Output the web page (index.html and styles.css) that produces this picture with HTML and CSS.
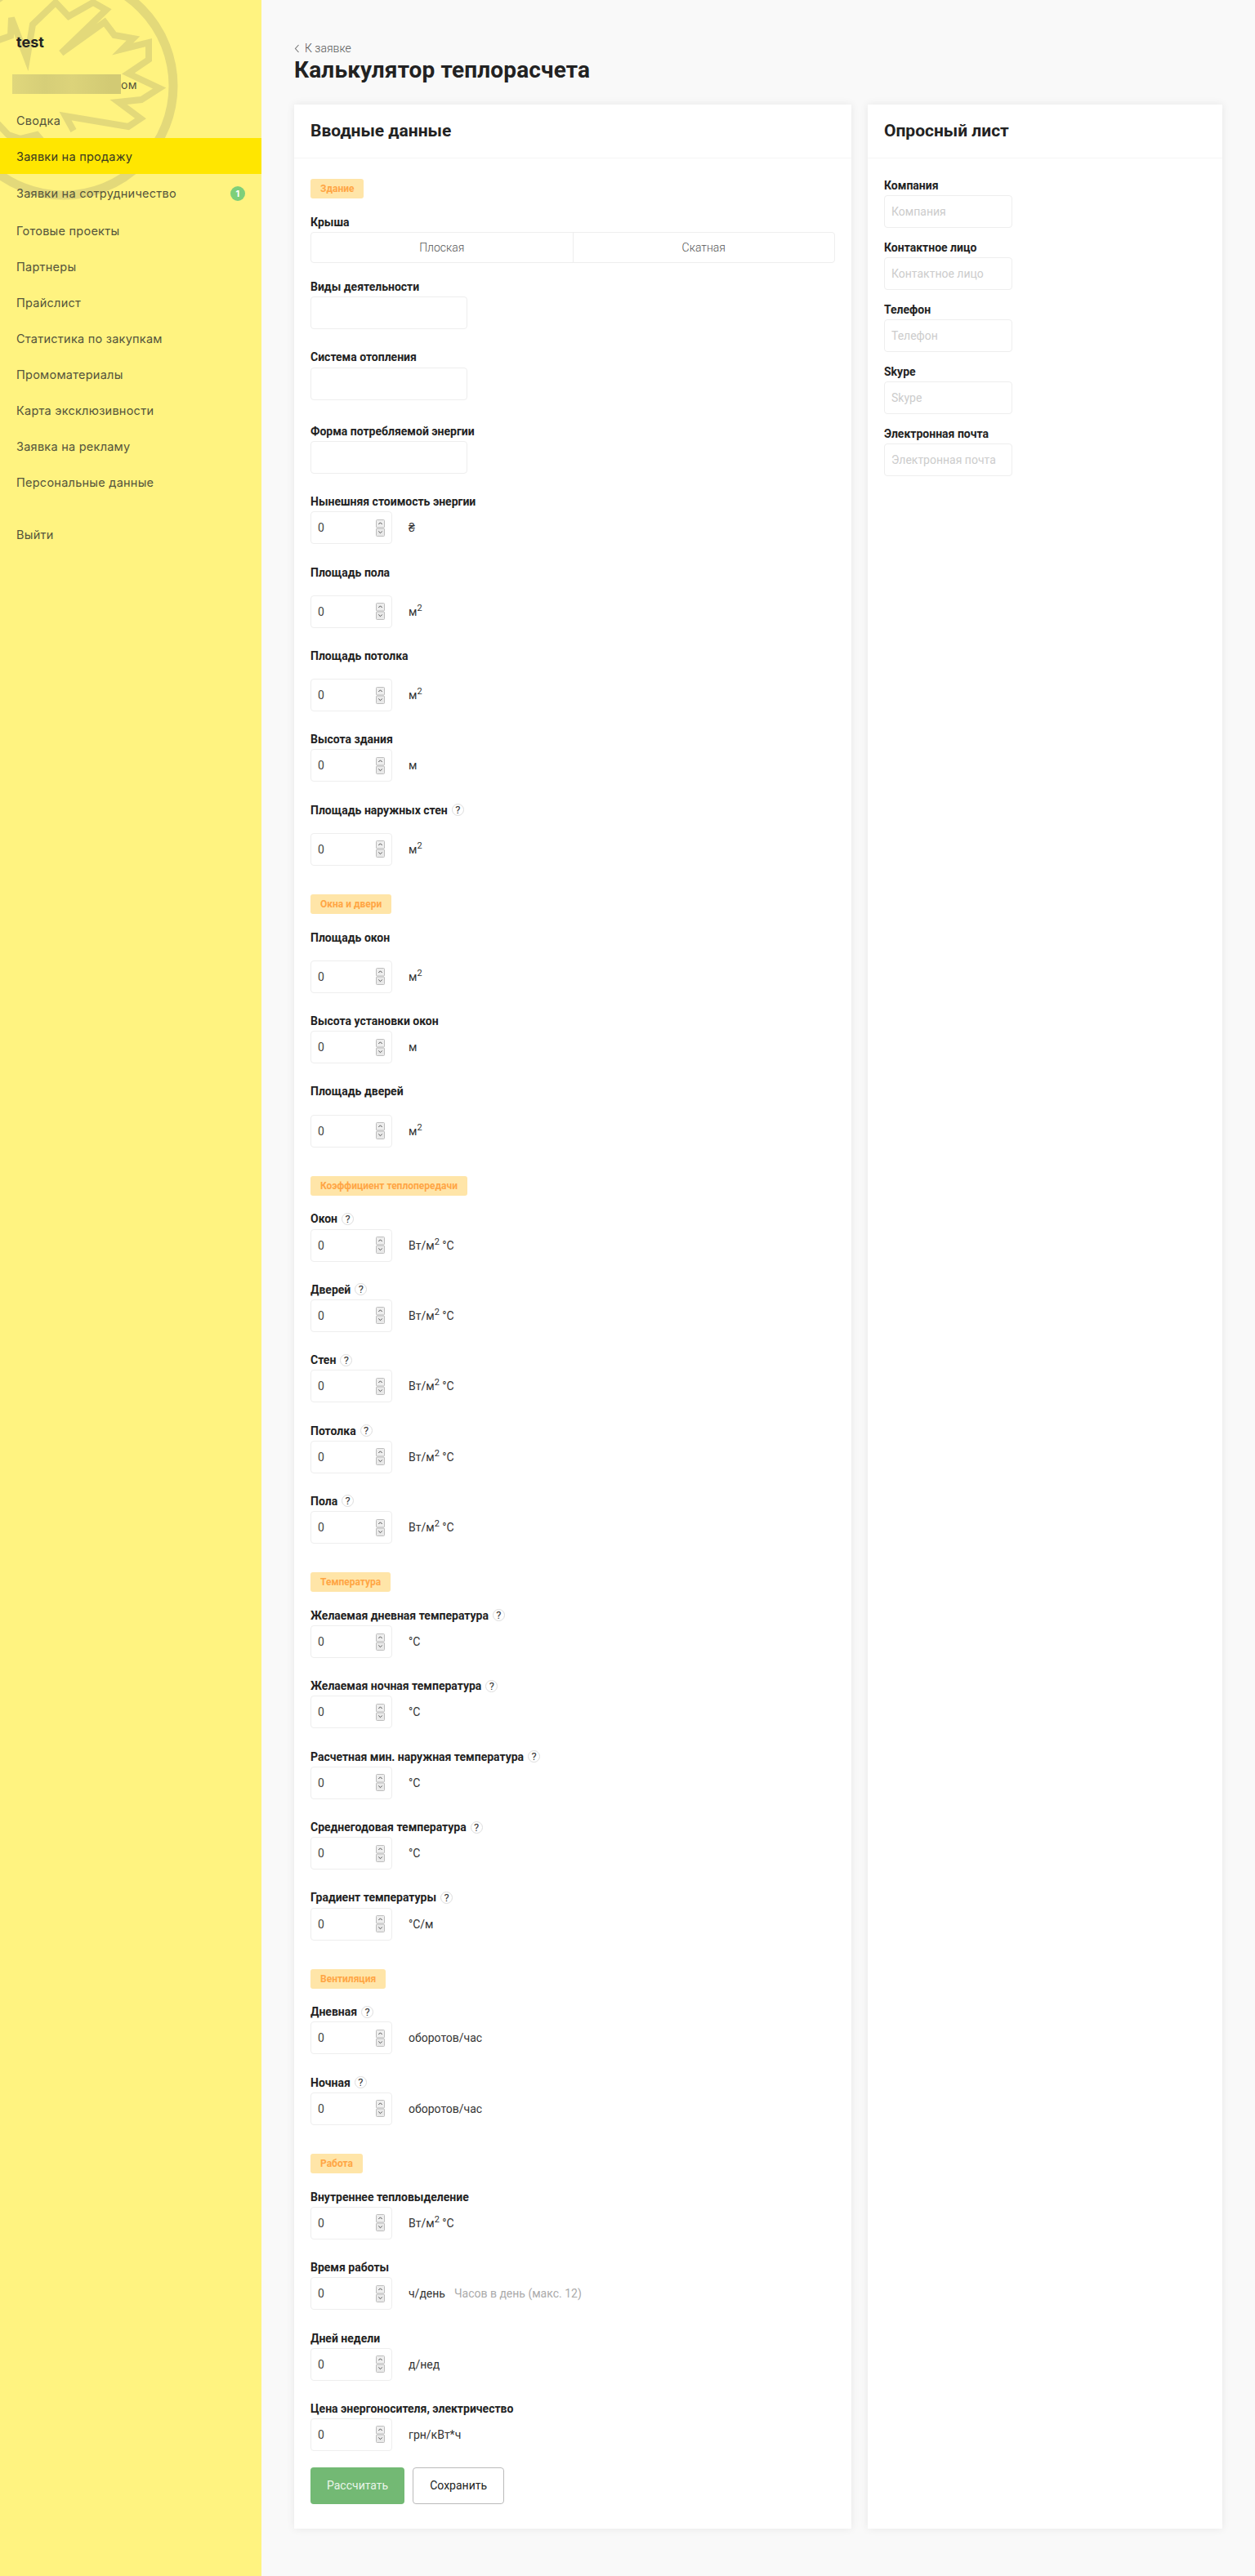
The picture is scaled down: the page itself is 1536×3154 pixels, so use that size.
FILE: index.html
```html
<!DOCTYPE html>
<html lang="ru">

<head>
    <meta charset="UTF-8">
    <meta name="viewport" content="width=device-width, initial-scale=1.0">
    <title>Калькулятор теплорасчета</title>
    <link rel="stylesheet" href="styles.css">
</head>

<body>

    <aside class="sidebar">
        <svg class="watermark" width="230" height="260" viewBox="0 0 230 260" fill="none">
            <circle cx="78" cy="105" r="134" stroke-width="11" />
            <path stroke-width="8" stroke-linejoin="miter"
                d="M-4 50 L13 44 L14 22 L33 72 L40 30 L68 3 L84 20 L114 3 L130 12 L75 65 L128 27 L140 43 L163 47 L150 60 L182 52 L182 73 L157 90 L195 108 L173 122 L145 125 L172 145 L157 155 L80 142 L90 160" />
            <path stroke-width="8" d="M-4 150 L10 165 L25 170 L45 165 L62 185" />
        </svg>
        <div class="user-name">test</div>
        <div class="user-mail"><span class="blurred"></span><span>ом</span></div>
        <nav class="menu">
            <a class="menu-item">Сводка</a>
            <a class="menu-item active">Заявки на продажу</a>
            <a class="menu-item tall">Заявки на сотрудничество <span class="count">1</span></a>
            <a class="menu-item">Готовые проекты</a>
            <a class="menu-item">Партнеры</a>
            <a class="menu-item">Прайслист</a>
            <a class="menu-item">Статистика по закупкам</a>
            <a class="menu-item">Промоматериалы</a>
            <a class="menu-item">Карта эксклюзивности</a>
            <a class="menu-item">Заявка на рекламу</a>
            <a class="menu-item">Персональные данные</a>
            <a class="menu-item logout">Выйти</a>
        </nav>
    </aside>

    <main class="content">
        <a class="back">
            <svg width="7" height="11" viewBox="0 0 7 11" fill="none">
                <path d="M5.5 1 L1.5 5.5 L5.5 10" stroke="#777" stroke-width="1.1" />
            </svg>
            К заявке
        </a>
        <h1 class="page-title">Калькулятор теплорасчета</h1>

        <div class="columns">
            <section class="card">
                <h2 class="card-title">Вводные данные</h2>
                <div class="card-body">
                    <div class="badge first">Здание</div>
                    <div class="field roof">
                        <label class="label">Крыша</label>
                        <div class="segments">
                            <div class="segment">Плоская</div>
                            <div class="segment">Скатная</div>
                        </div>
                    </div>
                    <div class="field">
                        <label class="label">Виды деятельности</label>
                        <input class="box wide" type="text">
                    </div>
                    <div class="field extra">
                        <label class="label">Система отопления</label>
                        <input class="box wide" type="text">
                    </div>
                    <div class="field">
                        <label class="label">Форма потребляемой энергии</label>
                        <input class="box wide" type="text">
                    </div>
                    <div class="field">
                        <label class="label">Нынешняя стоимость энергии</label>
                        <div class="row"><input class="box num" type="number" value="0"><span class="unit">₴</span></div>
                    </div>
                    <div class="field">
                        <label class="label spaced">Площадь пола</label>
                        <div class="row"><input class="box num" type="number" value="0"><span class="unit">м<sup>2</sup></span></div>
                    </div>
                    <div class="field">
                        <label class="label spaced">Площадь потолка</label>
                        <div class="row"><input class="box num" type="number" value="0"><span class="unit">м<sup>2</sup></span></div>
                    </div>
                    <div class="field">
                        <label class="label">Высота здания</label>
                        <div class="row"><input class="box num" type="number" value="0"><span class="unit">м</span></div>
                    </div>
                    <div class="field">
                        <label class="label spaced">Площадь наружных стен <span class="tip">?</span></label>
                        <div class="row"><input class="box num" type="number" value="0"><span class="unit">м<sup>2</sup></span></div>
                    </div>

                    <div class="badge">Окна и двери</div>
                    <div class="field">
                        <label class="label spaced">Площадь окон</label>
                        <div class="row"><input class="box num" type="number" value="0"><span class="unit">м<sup>2</sup></span></div>
                    </div>
                    <div class="field">
                        <label class="label">Высота установки окон</label>
                        <div class="row"><input class="box num" type="number" value="0"><span class="unit">м</span></div>
                    </div>
                    <div class="field">
                        <label class="label spaced">Площадь дверей</label>
                        <div class="row"><input class="box num" type="number" value="0"><span class="unit">м<sup>2</sup></span></div>
                    </div>

                    <div class="badge">Коэффициент теплопередачи</div>
                    <div class="field">
                        <label class="label">Окон <span class="tip">?</span></label>
                        <div class="row"><input class="box num" type="number" value="0"><span class="unit">Вт/м<sup>2</sup> °C</span></div>
                    </div>
                    <div class="field">
                        <label class="label">Дверей <span class="tip">?</span></label>
                        <div class="row"><input class="box num" type="number" value="0"><span class="unit">Вт/м<sup>2</sup> °C</span></div>
                    </div>
                    <div class="field">
                        <label class="label">Стен <span class="tip">?</span></label>
                        <div class="row"><input class="box num" type="number" value="0"><span class="unit">Вт/м<sup>2</sup> °C</span></div>
                    </div>
                    <div class="field">
                        <label class="label">Потолка <span class="tip">?</span></label>
                        <div class="row"><input class="box num" type="number" value="0"><span class="unit">Вт/м<sup>2</sup> °C</span></div>
                    </div>
                    <div class="field">
                        <label class="label">Пола <span class="tip">?</span></label>
                        <div class="row"><input class="box num" type="number" value="0"><span class="unit">Вт/м<sup>2</sup> °C</span></div>
                    </div>

                    <div class="badge">Температура</div>
                    <div class="field">
                        <label class="label">Желаемая дневная температура <span class="tip">?</span></label>
                        <div class="row"><input class="box num" type="number" value="0"><span class="unit">°C</span></div>
                    </div>
                    <div class="field">
                        <label class="label">Желаемая ночная температура <span class="tip">?</span></label>
                        <div class="row"><input class="box num" type="number" value="0"><span class="unit">°C</span></div>
                    </div>
                    <div class="field">
                        <label class="label">Расчетная мин. наружная температура <span class="tip">?</span></label>
                        <div class="row"><input class="box num" type="number" value="0"><span class="unit">°C</span></div>
                    </div>
                    <div class="field">
                        <label class="label">Среднегодовая температура <span class="tip">?</span></label>
                        <div class="row"><input class="box num" type="number" value="0"><span class="unit">°C</span></div>
                    </div>
                    <div class="field">
                        <label class="label">Градиент температуры <span class="tip">?</span></label>
                        <div class="row"><input class="box num" type="number" value="0"><span class="unit">°C/м</span></div>
                    </div>

                    <div class="badge">Вентиляция</div>
                    <div class="field">
                        <label class="label">Дневная <span class="tip">?</span></label>
                        <div class="row"><input class="box num" type="number" value="0"><span class="unit">оборотов/час</span></div>
                    </div>
                    <div class="field">
                        <label class="label">Ночная <span class="tip">?</span></label>
                        <div class="row"><input class="box num" type="number" value="0"><span class="unit">оборотов/час</span></div>
                    </div>

                    <div class="badge">Работа</div>
                    <div class="field">
                        <label class="label">Внутреннее тепловыделение</label>
                        <div class="row"><input class="box num" type="number" value="0"><span class="unit">Вт/м<sup>2</sup> °C</span></div>
                    </div>
                    <div class="field">
                        <label class="label">Время работы</label>
                        <div class="row"><input class="box num" type="number" value="0"><span class="unit">ч/день</span><span class="hint">Часов в день (макс. 12)</span></div>
                    </div>
                    <div class="field">
                        <label class="label">Дней недели</label>
                        <div class="row"><input class="box num" type="number" value="0"><span class="unit">д/нед</span></div>
                    </div>
                    <div class="field last">
                        <label class="label">Цена энергоносителя, электричество</label>
                        <div class="row"><input class="box num" type="number" value="0"><span class="unit">грн/кВт*ч</span></div>
                    </div>

                    <div class="actions">
                        <button class="btn btn-green">Рассчитать</button>
                        <button class="btn btn-white">Сохранить</button>
                    </div>
                </div>
            </section>

            <section class="card">
                <h2 class="card-title">Опросный лист</h2>
                <div class="card-body survey">
                    <div class="survey-field">
                        <label class="label">Компания</label>
                        <input class="box survey-input" type="text" placeholder="Компания">
                    </div>
                    <div class="survey-field">
                        <label class="label">Контактное лицо</label>
                        <input class="box survey-input" type="text" placeholder="Контактное лицо">
                    </div>
                    <div class="survey-field">
                        <label class="label">Телефон</label>
                        <input class="box survey-input" type="text" placeholder="Телефон">
                    </div>
                    <div class="survey-field">
                        <label class="label">Skype</label>
                        <input class="box survey-input" type="text" placeholder="Skype">
                    </div>
                    <div class="survey-field">
                        <label class="label">Электронная почта</label>
                        <input class="box survey-input" type="text" placeholder="Электронная почта">
                    </div>
                </div>
            </section>
        </div>
    </main>

</body>

</html>
```

FILE: styles.css
```css
* {
    box-sizing: border-box;
}

body {
    font-family: Roboto, "Liberation Sans", sans-serif;
    font-size: 14px;
    color: #222;
    margin: 0;
    padding: 0;
    display: flex;
    min-height: 3154px;
    background-color: #f9f9f9;
}

/* sidebar */

.sidebar {
    position: relative;
    flex: 0 0 320px;
    overflow: hidden;
    background-color: #fff380;
    font-family: Inter, "Noto Sans", sans-serif;
}

.watermark {
    position: absolute;
    left: 0;
    top: 0;
    stroke: #e3d97a;
}

.user-name {
    position: relative;
    padding: 40px 20px 0;
    height: 91px;
    font-size: 18px;
    font-weight: 700;
    line-height: 24px;
    color: #222;
}

.user-mail {
    position: relative;
    display: flex;
    align-items: center;
    height: 24px;
    padding-left: 15px;
    font-size: 14px;
    letter-spacing: 0.3px;
    color: #55553c;
}

.blurred {
    width: 133px;
    height: 24px;
    background: linear-gradient(90deg, #e0d77c, #d6ce78 30%, #dcd37a 55%, #d2ca74 90%);
}

.menu {
    position: relative;
    display: flex;
    flex-direction: column;
    margin-top: 10px;
}

.menu-item {
    display: flex;
    align-items: center;
    justify-content: space-between;
    height: 44px;
    padding: 0 20px;
    font-size: 14.5px;
    letter-spacing: 0.25px;
    color: #55553c;
}

.menu-item.active {
    background-color: #ffe600;
    color: #3a3a20;
}

.menu-item.tall {
    height: 47px;
}

.menu-item.logout {
    margin-top: 20px;
}

.count {
    display: flex;
    align-items: center;
    justify-content: center;
    width: 18px;
    height: 18px;
    border-radius: 50%;
    background-color: #7dcf7a;
    color: #fff;
    font-size: 11px;
    font-weight: 700;
}

/* content */

.content {
    flex: 1;
    padding: 48px 40px 59px;
}

.back {
    display: flex;
    align-items: center;
    gap: 6px;
    height: 22px;
    font-weight: 300;
    color: #555;
}

.page-title {
    margin: 0 0 26px;
    font-size: 28px;
    font-weight: 700;
    line-height: 32px;
    letter-spacing: 0.15px;
    color: #222;
}

.columns {
    display: grid;
    grid-template-columns: 682px 1fr;
    gap: 20px;
}

.card {
    background-color: #fff;
    box-shadow: 0 0 10px rgba(0, 0, 0, 0.08);
}

.card-title {
    margin: 0;
    height: 66px;
    padding: 0 20px;
    border-bottom: 1px solid #f5f5f5;
    font-size: 21px;
    font-weight: 700;
    line-height: 65px;
    color: #222;
}

.card-body {
    padding: 25px 20px 30px;
}

.badge {
    width: fit-content;
    height: 24px;
    margin: 35px 0 18.8px;
    padding: 0 12px;
    border-radius: 3px;
    background-color: #ffe5a8;
    color: #ffa544;
    font-size: 12px;
    font-weight: 700;
    line-height: 24px;
}

.badge.first {
    margin-top: 0;
}

.field {
    margin-bottom: 24.2px;
}

.field.roof {
    margin-bottom: 19px;
}

.field.extra {
    margin-bottom: 28.2px;
}

.field.last {
    margin-bottom: 20px;
}

.label {
    display: flex;
    align-items: center;
    gap: 5px;
    height: 22.2px;
    padding-bottom: 2px;
    font-size: 14px;
    font-weight: 700;
    color: #222;
}

.label.spaced {
    margin-bottom: 16px;
}

.tip {
    display: flex;
    align-items: center;
    justify-content: center;
    width: 15px;
    height: 15px;
    border: 1px solid #ddd;
    border-radius: 50%;
    font-size: 13px;
    font-weight: 400;
    color: #333;
}

.segments {
    display: flex;
    height: 38px;
    border: 1px solid #eee;
    border-radius: 4px;
}

.segment {
    flex: 1;
    text-align: center;
    line-height: 36px;
    font-weight: 300;
    color: #555;
}

.segment + .segment {
    border-left: 1px solid #eee;
}

.row {
    display: flex;
    align-items: center;
}

.box {
    display: block;
    height: 40px;
    padding: 0 8px;
    border: 1px solid #eee;
    border-radius: 4px;
    background-color: #fff;
    outline: none;
    font-family: inherit;
    font-size: 14px;
    color: #444;
}

.box.wide {
    width: 192px;
}

.box.num {
    width: 100px;
}

.box.num::-webkit-inner-spin-button {
    -webkit-appearance: none;
    appearance: none;
    opacity: 1;
    width: 11px;
    height: 21px;
    background: url("data:image/svg+xml,%3Csvg xmlns='http://www.w3.org/2000/svg' width='11' height='21' fill='none'%3E%3Crect x='.5' y='.5' width='10' height='9.5' rx='1' fill='%23eee' stroke='%23bdbdbd'/%3E%3Crect x='.5' y='11' width='10' height='9.5' rx='1' fill='%23e9e9e9' stroke='%23bdbdbd'/%3E%3Cpath d='M3.3 6 L5.5 3.8 L7.7 6 M3.3 14.5 L5.5 16.7 L7.7 14.5' stroke='%23555'/%3E%3C/svg%3E") no-repeat center;
}

.unit {
    margin-left: 20px;
    color: #333;
}

.unit sup {
    font-size: 11px;
    line-height: 0;
}

.hint {
    margin-left: 11px;
    color: #aaa;
}

.actions {
    display: flex;
    gap: 10px;
}

.btn {
    height: 45px;
    padding: 0 20px;
    border-radius: 4px;
    font-family: inherit;
    font-size: 14px;
}

.btn-green {
    border: 0;
    background-color: #73b974;
    color: #eaf5ea;
}

.btn-white {
    border: 1px solid #bbb;
    background-color: #fff;
    color: #222;
}

/* survey */

.survey {
    padding-top: 23px;
}

.survey-field {
    margin-bottom: 13.8px;
}

.survey-input {
    width: 157px;
}

.survey-input::placeholder {
    color: #ccc;
}
```
